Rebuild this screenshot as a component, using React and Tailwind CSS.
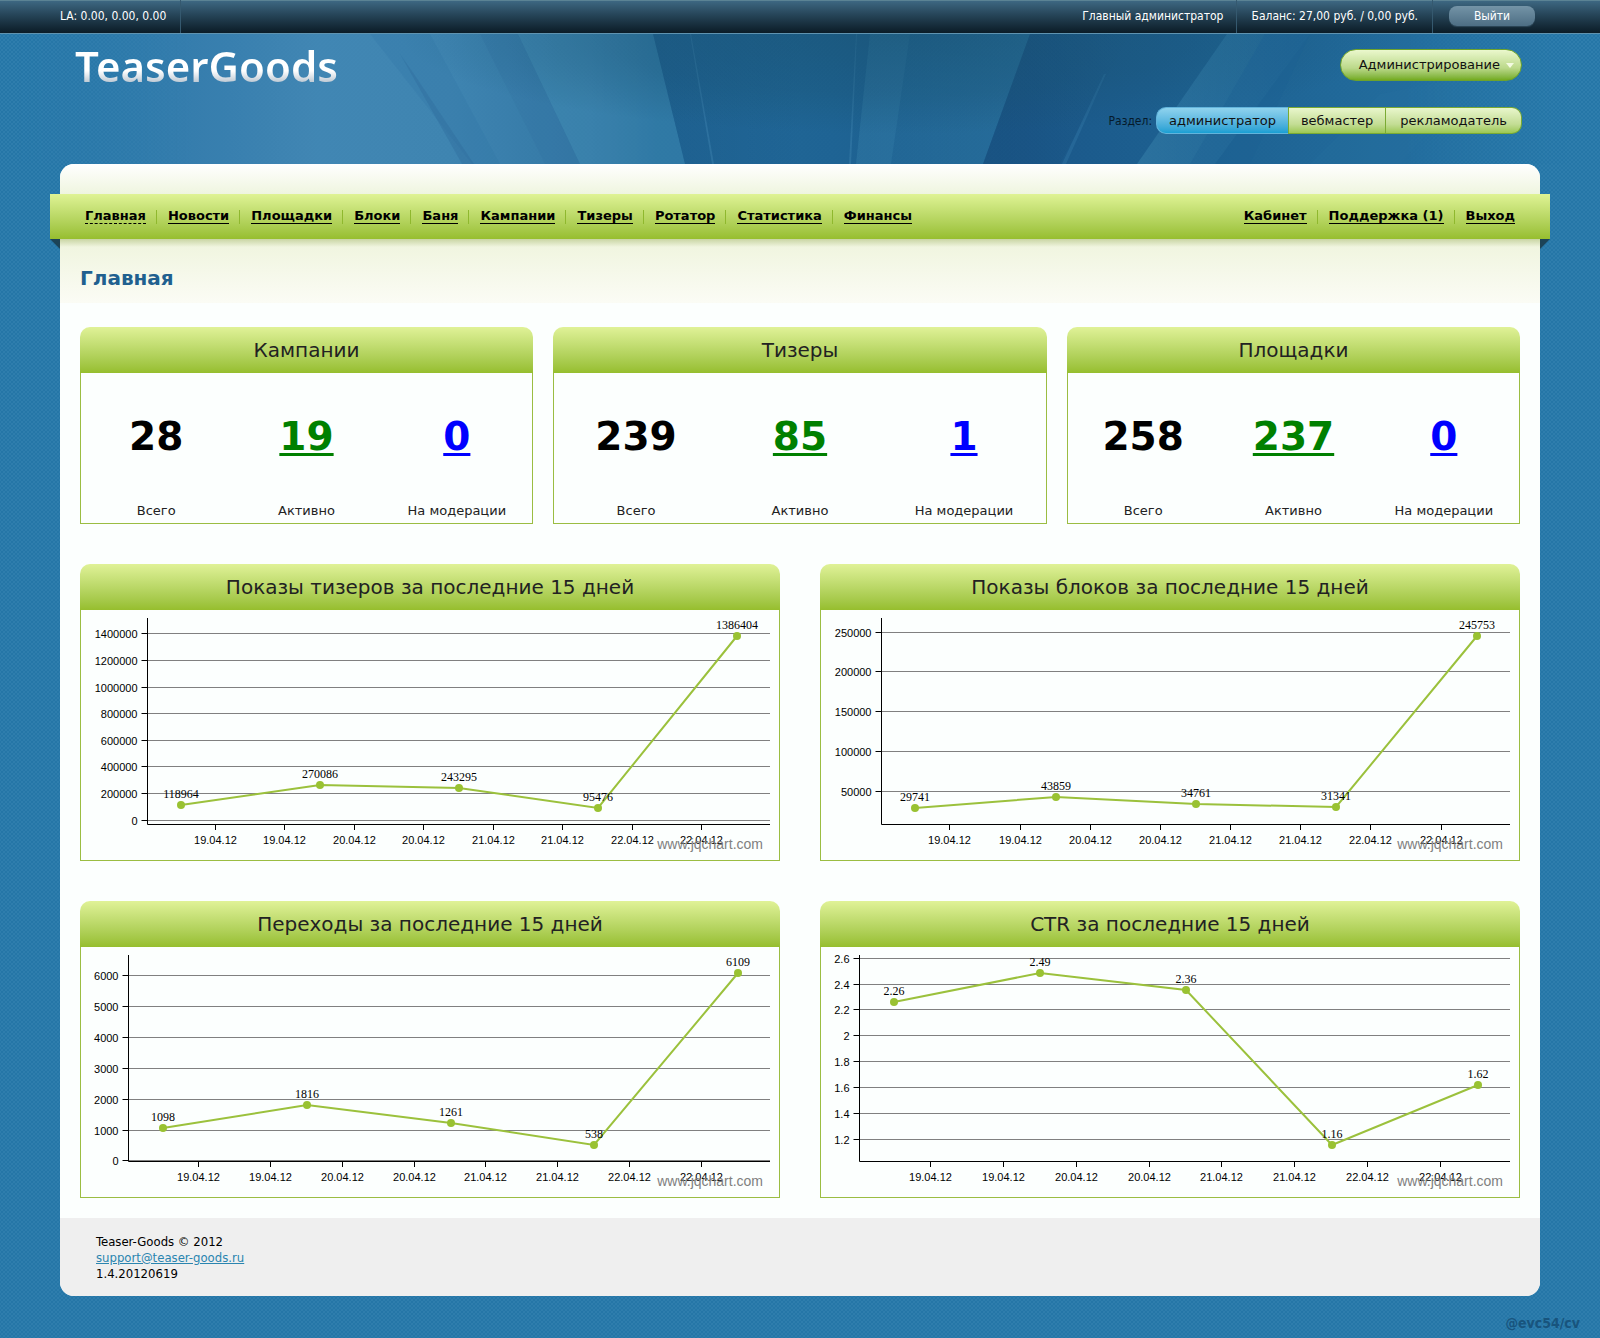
const COND = 'font-["DejaVu_Sans_Condensed","DejaVu_Sans",sans-serif]';

const NAV_LEFT = ["Главная", "Новости", "Площадки", "Блоки", "Баня", "Кампании", "Тизеры", "Ротатор", "Статистика", "Финансы"];
const NAV_RIGHT = ["Кабинет", "Поддержка (1)", "Выход"];

const STATS = [
  { title: "Кампании", total: 28, active: 19, moderation: 0 },
  { title: "Тизеры", total: 239, active: 85, moderation: 1 },
  { title: "Площадки", total: 258, active: 237, moderation: 0 },
];

const DAYS = ["19.04.12", "19.04.12", "20.04.12", "20.04.12", "21.04.12", "21.04.12", "22.04.12", "22.04.12"];

const CHARTS = [
  {
    title: "Показы тизеров за последние 15 дней",
    axis: 66.5,
    grid: [[23.5, "1400000"], [50.5, "1200000"], [77.5, "1000000"], [103.5, "800000"], [130.5, "600000"], [156.5, "400000"], [183.5, "200000"], [210.5, "0"]],
    ticks: [134.5, 203.5, 273.5, 342.5, 412.5, 481.5, 551.5, 620.5],
    points: [[100, 195, "118964"], [239, 175, "270086"], [378, 178, "243295"], [517, 198, "95476"], [656, 26, "1386404"]],
  },
  {
    title: "Показы блоков за последние 15 дней",
    axis: 60.5,
    grid: [[22.5, "250000"], [61.5, "200000"], [101.5, "150000"], [141.5, "100000"], [181.5, "50000"]],
    ticks: [128.5, 199.5, 269.5, 339.5, 409.5, 479.5, 549.5, 620.5],
    points: [[94, 198, "29741"], [235, 187, "43859"], [375, 194, "34761"], [515, 197, "31341"], [656, 26, "245753"]],
  },
  {
    title: "Переходы за последние 15 дней",
    axis: 47.5,
    grid: [[28.5, "6000"], [59.5, "5000"], [90.5, "4000"], [121.5, "3000"], [152.5, "2000"], [183.5, "1000"], [213.5, "0"]],
    ticks: [117.5, 189.5, 261.5, 333.5, 404.5, 476.5, 548.5, 620.5],
    points: [[82, 181, "1098"], [226, 158, "1816"], [370, 176, "1261"], [513, 198, "538"], [657, 26, "6109"]],
  },
  {
    title: "CTR за последние 15 дней",
    axis: 38.5,
    grid: [[11.5, "2.6"], [37.5, "2.4"], [62.5, "2.2"], [88.5, "2"], [114.5, "1.8"], [140.5, "1.6"], [166.5, "1.4"], [192.5, "1.2"]],
    ticks: [109.5, 182.5, 255.5, 328.5, 400.5, 473.5, 546.5, 619.5],
    points: [[73, 55, "2.26"], [219, 26, "2.49"], [365, 43, "2.36"], [511, 198, "1.16"], [657, 138, "1.62"]],
  },
];

function Beams() {
  return (
    <svg className="absolute inset-0 h-full w-full opacity-90" viewBox="0 0 1600 130" preserveAspectRatio="none" aria-hidden="true">
      <defs>
        <linearGradient id="sky" x1="0" x2="1" y1="0" y2="0">
          <stop offset="0.01" stopColor="#2d7aab" stopOpacity="0" />
          <stop offset="0.12" stopColor="#377eae" />
          <stop offset="0.2" stopColor="#4488b5" />
          <stop offset="0.28" stopColor="#4186b2" />
          <stop offset="0.37" stopColor="#3577a4" />
          <stop offset="0.41" stopColor="#226898" />
          <stop offset="0.52" stopColor="#1e6292" />
          <stop offset="0.64" stopColor="#1a5587" />
          <stop offset="0.76" stopColor="#1d6090" />
          <stop offset="0.88" stopColor="#226b9c" />
          <stop offset="0.98" stopColor="#2576a8" stopOpacity="0" />
        </linearGradient>
        <radialGradient id="top" cx="0.5" cy="0" r="0.5" gradientTransform="translate(0 0) scale(1 2)">
          <stop offset="0" stopColor="#174c68" stopOpacity="0.55" />
          <stop offset="0.6" stopColor="#174c68" stopOpacity="0.3" />
          <stop offset="1" stopColor="#174c68" stopOpacity="0" />
        </radialGradient>
        <linearGradient id="fadeR" x1="0" x2="1" y1="0" y2="0">
          <stop offset="0" stopColor="#3b86ae" stopOpacity="0.5" />
          <stop offset="1" stopColor="#3b86ae" stopOpacity="0.08" />
        </linearGradient>
        <linearGradient id="fadeL" x1="1" x2="0" y1="0" y2="0">
          <stop offset="0" stopColor="#2f7ca6" stopOpacity="0.6" />
          <stop offset="1" stopColor="#2f7ca6" stopOpacity="0.15" />
        </linearGradient>
        <linearGradient id="darkL" x1="0" x2="1" y1="0" y2="0">
          <stop offset="0" stopColor="#154a78" stopOpacity="0.6" />
          <stop offset="1" stopColor="#154a78" stopOpacity="0" />
        </linearGradient>
      </defs>
      <rect width="1600" height="130" fill="url(#sky)" />
      <polygon points="370,0 430,0 500,130 472,130" fill="#2f6f9f" opacity="0.2" />
      <polygon points="400,20 414,40 474,130 462,130" fill="#2a6594" opacity="0.3" />
      <polygon points="480,0 518,0 580,130 545,130" fill="#2f70a0" opacity="0.25" />
      <polygon points="518,0 653,0 685,130 580,130" fill="#4490b6" opacity="0.45" />
      <polygon points="653,0 800,0 800,130 685,130" fill="url(#darkL)" opacity="0.6" />
      <polygon points="690,0 691,0 714,130 712,130" fill="#4b90ba" opacity="0.35" />
      <polygon points="856,0 857,0 851,130 849,130" fill="#4b90ba" opacity="0.35" />
      <polygon points="870,0 1030,0 983,130 856,130" fill="url(#fadeL)" />
      <polygon points="870,0 910,0 891,130 856,130" fill="#3a84ac" opacity="0.3" />
      <polygon points="1030,0 1130,0 1060,130 983,130" fill="url(#darkL)" />
      <polygon points="1104,40 1106,40 1066,130 1062,130" fill="#3a7fab" opacity="0.35" />
      <rect x="400" width="1000" height="100" fill="url(#top)" />
      <polygon points="1227,0 1310,0 1215,130 1137,130" fill="url(#fadeR)" />
      <polygon points="1265,0 1310,0 1250,130 1190,130" fill="#1c5f90" opacity="0.4" />
      <polygon points="1380,60 1480,40 1400,130 1310,130" fill="#2a74a2" opacity="0.2" />
    </svg>
  );
}

function TopBar() {
  return (
    <div className={`${COND} flex h-[34px] items-stretch justify-between border-b border-[#5f93b0] bg-linear-to-b from-[#3f6a85] to-[#0b1c27] pr-[65px] pl-[60px] text-xs text-white shadow-[inset_0_1px_0_#5b8394]`}>
      <div className="border-r border-[#35596f] pr-[14px] leading-8">LA: 0.00, 0.00, 0.00</div>
      <div className="flex items-stretch leading-8">
        <span className="border-r border-[#35596f] pr-[13px]">Главный администратор</span>
        <span className="border-r border-[#35596f] px-[14px]">Баланс: 27,00 руб. / 0,00 руб.</span>
        <button type="button" className="mt-[6px] ml-4 h-5 w-[86px] rounded-lg bg-linear-to-b from-[#7494a7] to-[#4d6e84] leading-5 shadow-[0_1px_1px_#2d4859]">
          Выйти
        </button>
      </div>
    </div>
  );
}

function Header() {
  return (
    <header className="relative h-[130px]">
      <Beams />
      <div className="relative flex h-full justify-between pr-[78px] pl-[75px]">
        <a href="#" className="mt-[2px] self-start bg-linear-to-b from-white from-58% to-[#b4c1cd] to-80% bg-clip-text font-['Noto_Sans'] text-[42px] leading-[60px] font-semibold text-transparent">
          TeaserGoods
        </a>
        <div className="flex flex-col items-end pt-[15px]">
          <button type="button" aria-haspopup="menu" className="flex h-8 items-center gap-[6px] rounded-2xl border border-[#6ea32b] bg-linear-to-b from-[#ebf8cd] via-[#bcd98a] via-60% to-[#74ab1c] pr-[7px] pl-[18px] text-[13px] text-[#111]">
            Администрирование
            <svg width="8" height="5" viewBox="0 0 8 5" aria-hidden="true"><path d="M0 0h8L4 5z" fill="#f4fbe2" /></svg>
          </button>
          <div className="mt-[26px] flex items-center">
            <span className={`${COND} pr-1 text-xs text-[#061a2a]`}>Раздел:</span>
            <div className="flex h-[27px] text-[13px] text-[#111]">
              <button type="button" className="rounded-l-[10px] border border-r-0 border-[#62b4dc] bg-linear-to-b from-[#8fd3ee] to-[#179fd3] px-3">администратор</button>
              <button type="button" className="border border-[#7aaa33] bg-linear-to-b from-[#e9f6cc] via-[#c3dd94] via-65% to-[#9cc852] px-3">вебмастер</button>
              <button type="button" className="rounded-r-[10px] border border-l-0 border-[#7aaa33] bg-linear-to-b from-[#e9f6cc] via-[#c3dd94] via-65% to-[#9cc852] px-[14px]">рекламодатель</button>
            </div>
          </div>
        </div>
      </div>
    </header>
  );
}

function NavList({ items, active }) {
  return (
    <ul className="flex items-center">
      {items.map((label, i) => (
        <li key={label} className={i ? "border-l border-[#8fb82e] pl-[11px]" : ""}>
          <a
            href="#"
            className={`mr-[10px] block h-[14px] border-b leading-[12px] text-black ${label === active ? "border-dashed border-black" : "border-black"}`}
          >
            {label}
          </a>
        </li>
      ))}
    </ul>
  );
}

function Nav() {
  return (
    <nav className="relative -mx-[10px] flex h-[45px] items-center justify-between bg-linear-to-b from-[#dff394] to-[#97be2e] pr-[25px] pl-[35px] text-[13px] font-bold">
      <div className="absolute inset-x-[10px] top-full h-2 bg-linear-to-b from-[#c9d5a4] to-transparent" />
      <div className="absolute top-full left-0 h-[10px] w-[10px] bg-[#1c4357] [clip-path:polygon(0_0,100%_0,100%_100%)]" />
      <div className="absolute top-full right-0 h-[10px] w-[10px] bg-[#1c4357] [clip-path:polygon(0_0,100%_0,0_100%)]" />
      <NavList items={NAV_LEFT} active="Главная" />
      <NavList items={NAV_RIGHT} />
    </nav>
  );
}

function Panel({ title, children }) {
  return (
    <section>
      <h2 className="h-[46px] rounded-t-[10px] bg-linear-to-b from-[#e0f297] to-[#96be2d] text-center text-xl leading-[46px] text-[#222]">{title}</h2>
      <div className="border border-t-0 border-[#9bbd42]">{children}</div>
    </section>
  );
}

function StatTable({ stat }) {
  return (
    <table className="w-full table-fixed text-center">
      <tbody>
        <tr className="h-[125px] text-[39px] font-bold">
          <td className="pt-1 text-black">{stat.total}</td>
          <td className="pt-1"><a href="#" className="text-[#008000] underline decoration-3 underline-offset-3">{stat.active}</a></td>
          <td className="pt-1"><a href="#" className="text-[#0000ff] underline decoration-3 underline-offset-3">{stat.moderation}</a></td>
        </tr>
        <tr className="h-[25px] text-[13px] text-[#222]">
          <td>Всего</td>
          <td>Активно</td>
          <td>На модерации</td>
        </tr>
      </tbody>
    </table>
  );
}

function LineChart({ chart }) {
  const { axis, grid, ticks, points, title } = chart;
  return (
    <svg viewBox="0 0 698 250" className="block w-full font-['Liberation_Sans']" role="img" aria-label={title}>
      {grid.map(([y]) => (
        <path key={y} d={`M${axis} ${y}H689`} stroke="#808080" />
      ))}
      <path d={`M${axis} 8V214.5H689`} fill="none" stroke="#000" />
      {grid.map(([y, label]) => (
        <g key={label}>
          <path d={`M${axis - 6} ${y}H${axis}`} stroke="#000" />
          <text x={axis - 10} y={y + 4} textAnchor="end" className="text-[11px]">{label}</text>
        </g>
      ))}
      {ticks.map((x, i) => (
        <g key={x}>
          <path d={`M${x} 214V220`} stroke="#000" />
          <text x={x} y="234" textAnchor="middle" className="text-[11px]">{DAYS[i]}</text>
        </g>
      ))}
      <polyline points={points.map(([x, y]) => `${x},${y}`).join(" ")} fill="none" stroke="#9bc13c" strokeWidth="2" />
      {points.map(([x, y, label]) => (
        <g key={label}>
          <circle cx={x} cy={y} r="4" fill="#99c232" />
          <text x={x} y={y - 7} textAnchor="middle" className="font-['Liberation_Serif'] text-xs">{label}</text>
        </g>
      ))}
      <text x="682" y="239" textAnchor="end" fill="#808080" className="text-sm">www.jqchart.com</text>
    </svg>
  );
}

export default function App() {
  return (
    <div className="min-h-screen bg-[#2576a7] bg-[radial-gradient(circle,#307fae_0.6px,transparent_1.2px),radial-gradient(circle,#307fae_0.6px,transparent_1.2px)] bg-[size:4px_4px] bg-[position:0_0,2px_2px] font-['DejaVu_Sans',sans-serif]">
      <TopBar />
      <Header />
      <main className="mx-[60px] rounded-[14px] bg-[#fcfffe]">
        <div className="h-[30px] rounded-t-[14px] bg-linear-to-b from-white to-[#eff5df]" />
        <Nav />
        <div className="h-[64px] bg-linear-to-b from-[#eff4dd] to-[#fbfcf5] px-5 pt-[27px]">
          <h1 className="text-xl leading-6 font-bold text-[#20608f]">Главная</h1>
        </div>
        <div className="px-5 pt-6 pb-5">
          <div className="grid grid-cols-[453fr_494fr_453fr] gap-5">
            {STATS.map((s) => (
              <Panel key={s.title} title={s.title}><StatTable stat={s} /></Panel>
            ))}
          </div>
          <div className="mt-10 grid grid-cols-2 gap-10">
            {CHARTS.map((c) => (
              <Panel key={c.title} title={c.title}><LineChart chart={c} /></Panel>
            ))}
          </div>
        </div>
        <footer className={`${COND} rounded-b-[14px] bg-[#efefef] px-9 pt-4 pb-[14px] text-[13px] leading-4 text-black`}>
          <p>Teaser-Goods © 2012</p>
          <p><a href="mailto:support@teaser-goods.ru" className="text-[#2a85b0] underline">support@teaser-goods.ru</a></p>
          <p>1.4.20120619</p>
        </footer>
      </main>
      <p className={`${COND} pt-[17px] pr-5 pb-[5px] text-right text-sm leading-5 font-bold text-[#18547d]`}>@evc54/cv</p>
    </div>
  );
}
